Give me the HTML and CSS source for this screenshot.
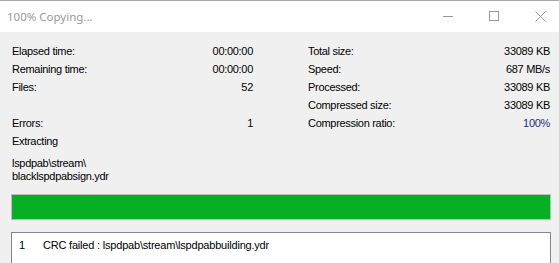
FILE: index.html
```html
<!DOCTYPE html>
<html>
<head>
<meta charset="utf-8">
<link rel="stylesheet" href="styles.css">
</head>
<body>
<div class="window">
  <div class="titlebar">
    <div class="title">100% Copying...</div>
    <div class="controls">
      <div class="ctl"><svg width="11" height="11" viewBox="0 0 11 11"><path d="M0 5.5H10" stroke="#999" stroke-width="1"/></svg></div>
      <div class="ctl"><svg width="11" height="11" viewBox="0 0 11 11"><rect x="0.5" y="0.5" width="9" height="9" fill="none" stroke="#999" stroke-width="1"/></svg></div>
      <div class="ctl"><svg width="11" height="11" viewBox="0 0 11 11"><path d="M0.5 0.5L10.5 10.5M10.5 0.5L0.5 10.5" stroke="#999" stroke-width="1"/></svg></div>
    </div>
  </div>
  <div class="content">
    <div class="stats">
      <div class="col left">
        <div class="row"><span>Elapsed time:</span><span>00:00:00</span></div>
        <div class="row"><span>Remaining time:</span><span>00:00:00</span></div>
        <div class="row"><span>Files:</span><span>52</span></div>
        <div class="row"></div>
        <div class="row"><span>Errors:</span><span>1</span></div>
        <div class="row"><span>Extracting</span></div>
      </div>
      <div class="col right">
        <div class="row"><span>Total size:</span><span>33089 KB</span></div>
        <div class="row"><span>Speed:</span><span>687 MB/s</span></div>
        <div class="row"><span>Processed:</span><span>33089 KB</span></div>
        <div class="row"><span>Compressed size:</span><span>33089 KB</span></div>
        <div class="row"><span>Compression ratio:</span><span class="ratio">100%</span></div>
      </div>
    </div>
    <div class="path">lspdpab\stream\<br>blacklspdpabsign.ydr</div>
    <div class="progress"><div class="fill" style="width:100%"></div></div>
    <div class="list">
      <div class="item"><span class="num">1</span><span class="msg">CRC failed : lspdpab\stream\lspdpabbuilding.ydr</span></div>
    </div>
  </div>
</div>
</body>
</html>
```

FILE: styles.css
```css
html, body {
  margin: 0;
  padding: 0;
  width: 559px;
  height: 263px;
  overflow: hidden;
  background: #f0f0f0;
}
.window {
  width: 559px;
  height: 263px;
  display: flex;
  flex-direction: column;
  overflow: hidden;
}
.titlebar {
  height: 31px;
  border-top: 1px solid #aaaaaa;
  background: #ffffff;
  display: flex;
  align-items: center;
  justify-content: space-between;
  flex-shrink: 0;
}
.title {
  font-family: "Noto Sans", sans-serif;
  font-size: 11.5px;
  color: #999999;
  padding-left: 7px;
}
.controls {
  display: flex;
  margin-right: -4px;
  height: 31px;
}
.ctl {
  width: 46px;
  display: flex;
  align-items: center;
  justify-content: center;
}
.ctl svg { display: block; }
.content {
  flex: 1;
  background: #f0f0f0;
  padding: 10px 8px 0 11px;
  font-family: "Liberation Sans", Arial, sans-serif;
  font-size: 11px;
  letter-spacing: -0.3px;
  color: #000;
}
.stats {
  display: flex;
  gap: 55px;
}
.col {
  display: flex;
  flex-direction: column;
}
.col.left {
  width: 241px;
  margin-left: 1px;
}
.col.right {
  width: 242px;
}
.row {
  height: 18px;
  display: flex;
  align-items: center;
  justify-content: space-between;
  white-space: nowrap;
}
.ratio { color: #1c2f72; }
.path {
  margin: 7px 0 0 1px;
  line-height: 13px;
}
.progress {
  margin-top: 11px;
  height: 24px;
  width: 538px;
  border: 1px solid #bcbcbc;
  background: #e6e6e6;
}
.fill {
  height: 100%;
  background: #06b025;
}
.list {
  margin-top: 12px;
  width: 538px;
  height: 40px;
  border: 1px solid #828790;
  background: #ffffff;
}
.item {
  display: flex;
  height: 18px;
  align-items: center;
  margin-top: 3px;
  white-space: nowrap;
}
.num {
  width: 24px;
  padding-left: 7px;
}
.msg { letter-spacing: -0.2px; }
```
